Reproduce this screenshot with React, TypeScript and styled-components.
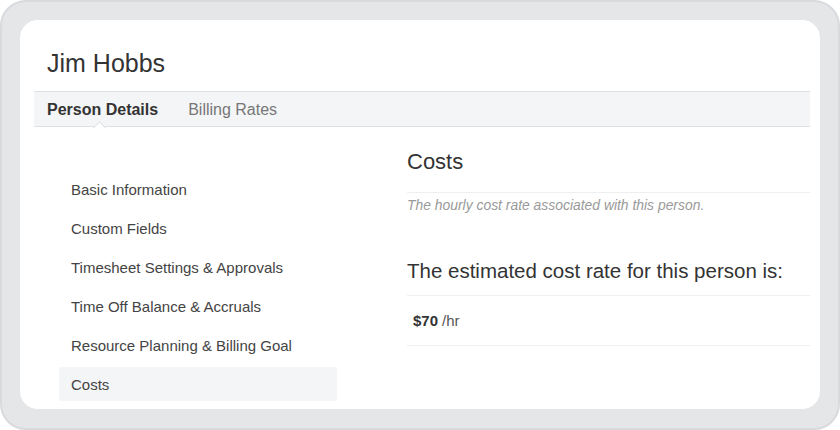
import React from "react";
import styled, { createGlobalStyle } from "styled-components";

const Global = createGlobalStyle`
  html, body { margin: 0; padding: 0; background: #ffffff; }
  body { font-family: "Liberation Sans", Arial, sans-serif; color: #333; }
  * { box-sizing: border-box; }
`;

const Frame = styled.div`
  width: 840px;
  height: 430px;
  border: 2px solid #d9dadd;
  border-radius: 26px;
  background: #e5e6e8;
  padding: 18px 18px 19px 18px;
`;

const Panel = styled.div`
  height: 100%;
  background: #ffffff;
  border-radius: 18px;
  padding: 28px 10px 0 14px;
  display: flex;
  flex-direction: column;
  overflow: hidden;
`;

const Title = styled.h1`
  margin: 0 0 13px 13px;
  font-size: 25px;
  line-height: 30px;
  font-weight: 400;
  color: #333;
`;

const TabBar = styled.div`
  display: flex;
  gap: 30px;
  height: 36px;
  padding: 2px 0 0 13px;
  background: #f4f5f6;
  border-top: 1px solid #dfe1e3;
  border-bottom: 1px solid #dfe1e3;
`;

const Tab = styled.div<{ $active?: boolean }>`
  position: relative;
  font-size: 16px;
  line-height: 32px;
  font-weight: ${(p) => (p.$active ? 700 : 400)};
  color: ${(p) => (p.$active ? "#333" : "#777")};
  &::after {
    content: "";
    display: ${(p) => (p.$active ? "block" : "none")};
    position: absolute;
    left: calc(50% - 8px);
    bottom: -6px;
    width: 8px;
    height: 8px;
    background: #ffffff;
    border-top: 1px solid #dfe1e3;
    border-left: 1px solid #dfe1e3;
    transform: rotate(45deg);
  }
`;

const Body = styled.div`
  display: grid;
  grid-template-columns: 278px 1fr;
  column-gap: 70px;
  padding-left: 25px;
`;

const Sidebar = styled.nav`
  display: flex;
  flex-direction: column;
  gap: 5px;
  padding-top: 45px;
`;

const NavItem = styled.div<{ $active?: boolean }>`
  height: 34px;
  display: flex;
  align-items: center;
  padding-left: 12px;
  font-size: 15px;
  color: #444;
  border-radius: 3px;
  background: ${(p) => (p.$active ? "#f4f5f6" : "transparent")};
`;

const Content = styled.section`
  padding-top: 22px;
`;

const Heading = styled.h2`
  margin: 0;
  font-size: 22px;
  line-height: 26px;
  font-weight: 400;
  color: #333;
  padding-bottom: 17px;
  border-bottom: 1px solid #eeeff0;
`;

const Description = styled.p`
  margin: 2px 0 0 0;
  font-size: 13.9px;
  line-height: 20px;
  font-style: italic;
  color: #9a9a9a;
`;

const SubHeading = styled.h3`
  margin: 44px 0 0 0;
  font-size: 20.5px;
  line-height: 24px;
  font-weight: 400;
  color: #333;
  padding-bottom: 12px;
  border-bottom: 1px solid #eeeff0;
`;

const RateRow = styled.div`
  height: 50px;
  display: flex;
  align-items: center;
  gap: 4px;
  padding-left: 6px;
  padding-bottom: 1px;
  font-size: 15px;
  color: #555;
  border-bottom: 1px solid #eeeff0;
`;

const Amount = styled.strong`
  font-weight: 700;
  color: #333;
`;

const navItems = [
  "Basic Information",
  "Custom Fields",
  "Timesheet Settings & Approvals",
  "Time Off Balance & Accruals",
  "Resource Planning & Billing Goal",
  "Costs",
];

export default function App() {
  return (
    <>
      <Global />
      <Frame>
        <Panel>
          <Title>Jim Hobbs</Title>
          <TabBar>
            <Tab $active>Person Details</Tab>
            <Tab>Billing Rates</Tab>
          </TabBar>
          <Body>
            <Sidebar>
              {navItems.map((item) => (
                <NavItem key={item} $active={item === "Costs"}>
                  {item}
                </NavItem>
              ))}
            </Sidebar>
            <Content>
              <Heading>Costs</Heading>
              <Description>The hourly cost rate associated with this person.</Description>
              <SubHeading>The estimated cost rate for this person is:</SubHeading>
              <RateRow>
                <Amount>$70</Amount>
                <span>/hr</span>
              </RateRow>
            </Content>
          </Body>
        </Panel>
      </Frame>
    </>
  );
}
